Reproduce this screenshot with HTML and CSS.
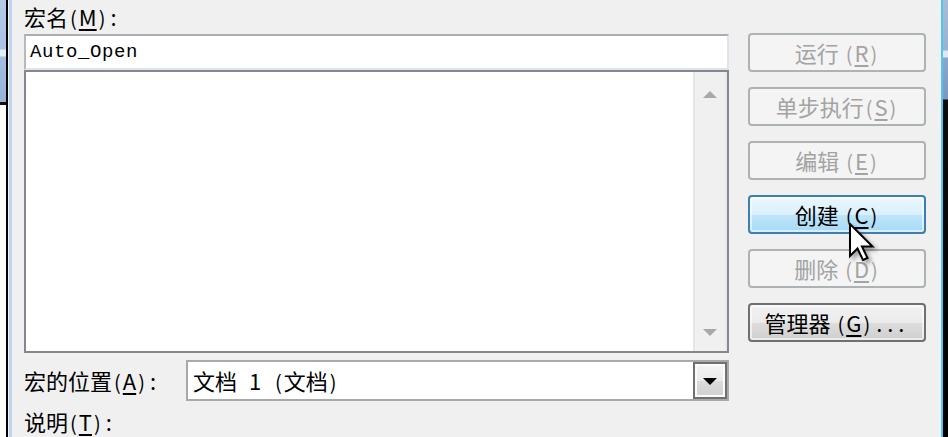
FILE: index.html
```html
<!DOCTYPE html>
<html lang="zh-CN">
<head>
<meta charset="utf-8">
<title>宏</title>
<link rel="stylesheet" href="styles.css">
</head>
<body>
<div class="screen">
  <div class="outside-left"></div>
  <div class="frame-left"></div>
  <div class="dialog">
    <div class="main">
      <div class="label top-label">宏名<span class="par">(</span><u>M</u><span class="par">)</span><span class="colon">:</span></div>
      <div class="textbox">Auto_Open</div>
      <div class="listbox">
        <div class="list-area"></div>
        <div class="vscroll">
          <span class="arrow up"></span>
          <span class="arrow down"></span>
        </div>
      </div>
      <div class="location-row">
        <span class="label loc-label">宏的位置<span class="par">(</span><u>A</u><span class="par">)</span><span class="colon">:</span></span>
        <div class="combo">
          <span class="combo-text">文档 1 <span class="par">(</span>文档<span class="par">)</span></span>
          <span class="combo-btn"><i class="tri"></i></span>
        </div>
      </div>
      <div class="label desc-label">说明<span class="par">(</span><u>T</u><span class="par">)</span><span class="colon">:</span></div>
    </div>
    <div class="buttons">
      <div class="btn disabled"><span class="cap">运行 <span class="par">(</span><u>R</u><span class="par">)</span></span></div>
      <div class="btn disabled"><span class="cap">单步执行<span class="par">(</span><u>S</u><span class="par">)</span></span></div>
      <div class="btn disabled"><span class="cap">编辑 <span class="par">(</span><u>E</u><span class="par">)</span></span></div>
      <div class="btn hot"><span class="cap">创建 <span class="par">(</span><u>C</u><span class="par">)</span></span></div>
      <div class="btn disabled"><span class="cap">删除 <span class="par">(</span><u>D</u><span class="par">)</span></span></div>
      <div class="btn normal"><span class="cap">管理器 <span class="par">(</span><u>G</u><span class="par">)</span><span class="dots">...</span></span></div>
    </div>
  </div>
  <div class="frame-right"></div>
  <div class="outside-right"></div>
  <svg class="cursor" width="30" height="42" viewBox="0 0 30 42">
    <path d="M1 1 L1 33 L8.5 25.5 L14 37 L18.5 35 L13 23.5 L23.5 23.5 Z" fill="#fff" stroke="#000" stroke-width="2" stroke-linejoin="miter"/>
  </svg>
</div>
</body>
</html>
```

FILE: styles.css
```css
* { box-sizing: border-box; }
html, body { margin: 0; padding: 0; }
body {
  width: 948px;
  height: 437px;
  overflow: hidden;
  font-family: "Noto Sans CJK SC", "Noto Sans", sans-serif;
  font-size: 22px;
  color: #000;
}
.screen {
  position: relative;
  display: flex;
  width: 948px;
  height: 437px;
  overflow: hidden;
}
.outside-left {
  width: 6px;
  flex: none;
  background: linear-gradient(to bottom,
    #b3cbe8 0px, #a9c3e3 49px, #e4eef8 50px, #e4eef8 56px, #a3bfe0 57px,
    #98b3d6 102px, #111 102px, #111 105px, #ffffff 105px);
}
.frame-left {
  width: 6px;
  flex: none;
  background: linear-gradient(to right, #000 0, #000 2px, #f4f4f4 2px, #f4f4f4 3px, #bed5ee 3px, #bed5ee 6px);
}
.frame-right {
  width: 2px;
  flex: none;
  background: #4fc6f2;
}
.outside-right {
  width: 5px;
  flex: none;
  background: linear-gradient(to bottom,
    #a9bcd6 0px, #9bb2d2 50px, #dde8f4 51px, #dde8f4 57px, #8aa6cc 58px,
    #7c98c0 99px, #0c0c0c 100px, #000 437px);
}
.dialog {
  flex: none;
  width: 929px;
  background: #f0f0f0;
  display: flex;
  padding-left: 12px;
  gap: 19px;
}
.main {
  width: 705px;
  flex: none;
  display: flex;
  flex-direction: column;
}
.label {
  line-height: 28px;
  white-space: nowrap;
}
.label u, .btn u { text-decoration-thickness: 2px; text-underline-offset: 3px; }
.par { font-size: 20px; padding: 0 2px; }
.colon { padding-left: 3px; }
.top-label { padding-top: 2px; }
.textbox {
  margin-top: 2px;
  height: 36px;
  background: #fff;
  border: 2px solid #e2e3ea;
  border-top-color: #abadb3;
  border-left-color: #b8b9c0;
  padding-left: 4px;
  font-family: "Liberation Mono", monospace;
  font-size: 19px;
  letter-spacing: 0.6px;
  line-height: 33px;
}
.listbox {
  height: 296px;
  border: 2px solid #828790;
  background: #fff;
  display: flex;
}
.list-area { flex: 1; }
.vscroll {
  width: 34px;
  flex: none;
  background: #f0f0f0;
  border-left: 2px solid #e6e6e6;
  border-right: 2px solid #e9e9e9;
  display: flex;
  flex-direction: column;
  justify-content: space-between;
  align-items: center;
  padding: 19px 0 15px;
}
.arrow {
  width: 0;
  height: 0;
  border-left: 7px solid transparent;
  border-right: 7px solid transparent;
}
.arrow.up { border-bottom: 7px solid #a8a8a8; }
.arrow.down { border-top: 7px solid #a8a8a8; }
.location-row {
  margin-top: 7px;
  height: 41px;
  display: flex;
  align-items: center;
}
.loc-label { width: 162px; flex: none; }
.combo {
  flex: 1;
  height: 41px;
  background: #fff;
  border: 2px solid #a9a9a9;
  display: flex;
  align-items: stretch;
}
.combo-text {
  flex: 1;
  padding-left: 5px;
  line-height: 36px;
  white-space: nowrap;
  word-spacing: 7px;
}
.combo-btn {
  width: 34px;
  flex: none;
  border: 2px solid #707070;
  background: linear-gradient(to bottom, #f4f4f4 0%, #ebebeb 50%, #dcdcdc 51%, #d0d0d0 100%);
  display: flex;
  align-items: center;
  justify-content: center;
  box-shadow: inset 0 0 0 2px #fbfbfb;
}
.tri {
  width: 0;
  height: 0;
  border-left: 7px solid transparent;
  border-right: 7px solid transparent;
  border-top: 7px solid #000;
  margin-top: 2px;
}
.desc-label { margin-top: 6px; }
.buttons {
  width: 178px;
  flex: none;
  display: flex;
  flex-direction: column;
  gap: 15px;
  padding-top: 33px;
}
.btn {
  height: 39px;
  border: 2px solid #adb2b5;
  border-radius: 4px;
  display: flex;
  align-items: center;
  justify-content: center;
  line-height: 28px;
  white-space: nowrap;
}
.cap { white-space: pre; }
.dots { letter-spacing: 5px; padding-left: 4px; }
.btn.disabled {
  background: #f4f4f4;
  color: #a3a3a3;
}
.btn.hot {
  border-color: #3c7fb1;
  background: linear-gradient(to bottom, #eaf6fd 0%, #d9f0fc 50%, #bee6fd 51%, #a7d9f5 100%);
  box-shadow: inset 0 0 0 2px rgba(255,255,255,0.55);
}
.btn.normal {
  border-color: #707070;
  background: linear-gradient(to bottom, #f2f2f2 0%, #ebebeb 50%, #dddddd 51%, #cfcfcf 100%);
  box-shadow: inset 0 0 0 2px rgba(255,255,255,0.6);
}
.cursor {
  position: absolute;
  left: 849px;
  top: 223px;
  filter: drop-shadow(3px 3px 2px rgba(0,0,0,0.35));
}
```
